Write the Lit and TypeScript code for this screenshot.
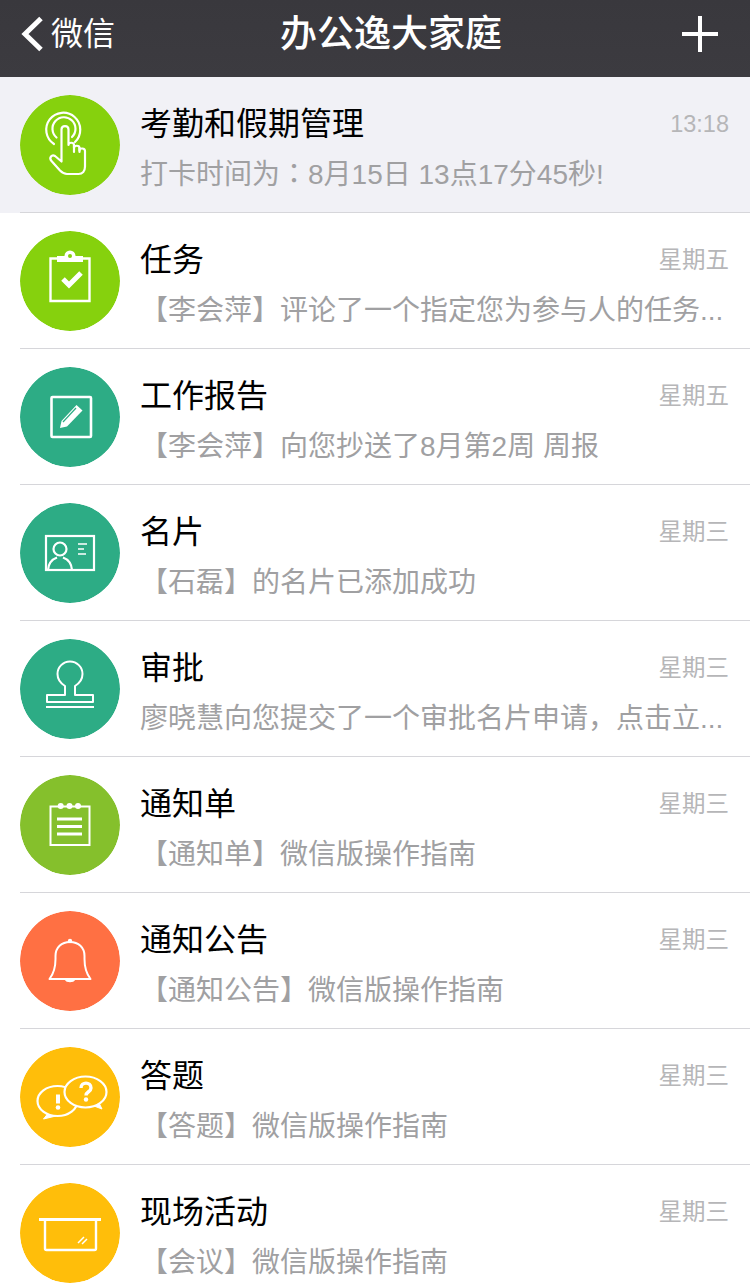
import { LitElement, html, css, svg } from "lit";
import { customElement } from "lit/decorators.js";

const icons: Record<string, unknown> = {
  hand: svg`<g fill="none" stroke="#fff" stroke-width="2.200" stroke-linejoin="round" stroke-linecap="round">
    <path d="M34 49A17 17 0 1 1 55 47"/><path d="M36.500 42.500A11.500 11.500 0 1 1 52 42"/>
    <path d="M31.500 66c-3-3.500 .5-7 3.500-5l6.500 5.500V34.500c0-4.600 7-4.600 7 0V50c0-3 5.500-3 5.500 0v3c0-3 5.500-3 5.500 0v2.500c0-3 5.500-2.500 5.500 .5v15.500c0 4.500-2.500 7.500-6.500 7.500H47c-3 0-5-1.500-7-3.500z"/>
    <path d="M54 50v7M59.500 53v4"/></g>`,
  task: svg`<g fill="none" stroke="#fff" stroke-width="2.400"><path d="M37 27.500h-6.500v42.500h39V27.500H63"/><path d="M37 25v6h26v-6h-7.500a5.500 5.500 0 0 0-11 0z" fill="#fff" stroke="none"/><circle cx="50" cy="25" r="2" fill="#86d10d" stroke="none"/><path d="M43 48l6 6 12-12" stroke-width="5"/></g>`,
  report: svg`<g fill="none" stroke="#fff"><rect x="31.500" y="30" width="39.500" height="40" stroke-width="2.600" rx="1"/><path d="M40 61l1.500-7 15-16 6 5.500-15.500 16z" fill="#fff" stroke="none"/><path d="M43 55l13-14" stroke="#2dac85" stroke-width="1.200"/></g>`,
  card: svg`<g fill="none" stroke="#fff" stroke-width="2.200"><rect x="26" y="33" width="48" height="34"/><circle cx="40" cy="46" r="6.500"/><path d="M28 67c.5-7 5-11 9-12.500M52 67c-.5-7-5-11-9-12.500"/><path d="M58 41h9M58 46h6M58 51h8" stroke-width="1.700"/></g>`,
  stamp: svg`<g fill="none" stroke="#fff" stroke-width="2" stroke-linejoin="round"><path d="M45 47v9H27v7h46v-7H55v-9c4-2.500 7.500-6.500 7.500-12a12.500 12.500 0 0 0-25 0c0 5.500 3.500 9.500 7.500 12z"/><path d="M26 68h48" stroke-width="2.200"/></g>`,
  note: svg`<g fill="none" stroke="#fff"><rect x="30.500" y="31.500" width="39" height="38.500" stroke-width="2"/><circle cx="40.700" cy="31" r="3" fill="#fff" stroke="none"/><circle cx="49.500" cy="31" r="3" fill="#fff" stroke="none"/><circle cx="58" cy="31" r="3" fill="#fff" stroke="none"/><path d="M37 44h25M37 51.500h25M37 59h25" stroke-width="3"/></g>`,
  bell: svg`<g fill="none" stroke="#fff" stroke-width="2" stroke-linejoin="round"><path d="M29.500 68c3.500-4.500 6-9.500 6-20v-3c0-8.500 6-14 14.500-14s14.500 5.500 14.500 14v3c0 10.500 2.500 15.500 6 20z"/><circle cx="50" cy="30" r="2.200" fill="#fff" stroke="none"/><path d="M45 69c1 3 9 3 10 0z" fill="#fff" stroke="none"/></g>`,
  quiz: svg`<g fill="none" stroke="#fff" stroke-width="2.200" stroke-linejoin="round"><ellipse cx="37.500" cy="54" rx="20" ry="15"/><path d="M27.500 67l-4 5 12.500-3" fill="#fff" stroke-width="1"/><ellipse cx="65.500" cy="45" rx="21" ry="15.500" fill="#ffbe0a"/><path d="M74 59l8 3-3-6" fill="#fff" stroke-width="1"/><path d="M61 41c0-6.500 10-6.500 10 0 0 4-5 3.500-5 7.500" stroke-width="3.400"/><circle cx="66" cy="52.500" r="2.200" fill="#fff" stroke="none"/><path d="M38 47.500v9" stroke-width="4"/><circle cx="38" cy="60.500" r="2.300" fill="#fff" stroke="none"/></g>`,
  meeting: svg`<g fill="none" stroke="#fff" stroke-width="2.400" stroke-linejoin="round"><path d="M19 36.500h62" stroke-width="2.800"/><path d="M25 36.500v29c0 1 .6 1.500 1.500 1.500h48c1 0 1.500-.5 1.500-1.500v-29"/><path d="M58 60l6-6M62 61l5-5" stroke-width="1.500"/></g>`,
};

const colon = html`<span class="tc">：</span>`;

const rows = [
  { icon: "hand", color: "#86d10d", title: "考勤和假期管理", time: "13:18", sub: html`打卡时间为${colon}8月15日 13点17分45秒!`, active: true },
  { icon: "task", color: "#86d10d", title: "任务", time: "星期五", sub: "【李会萍】评论了一个指定您为参与人的任务..." },
  { icon: "report", color: "#2dac85", title: "工作报告", time: "星期五", sub: "【李会萍】向您抄送了8月第2周 周报" },
  { icon: "card", color: "#2dac85", title: "名片", time: "星期三", sub: "【石磊】的名片已添加成功" },
  { icon: "stamp", color: "#2dac85", title: "审批", time: "星期三", sub: "廖晓慧向您提交了一个审批名片申请，点击立..." },
  { icon: "note", color: "#85c02c", title: "通知单", time: "星期三", sub: "【通知单】微信版操作指南" },
  { icon: "bell", color: "#ff7043", title: "通知公告", time: "星期三", sub: "【通知公告】微信版操作指南" },
  { icon: "quiz", color: "#ffbe0a", title: "答题", time: "星期三", sub: "【答题】微信版操作指南" },
  { icon: "meeting", color: "#ffbe0a", title: "现场活动", time: "星期三", sub: "【会议】微信版操作指南" },
];

@customElement("app-root")
export class AppRoot extends LitElement {
  static styles = css`
    :host {
      display: block;
      width: 750px;
      height: 1283px;
      overflow: hidden;
      background: #fff;
      font-family: "Liberation Sans", "Noto Sans CJK SC", sans-serif;
    }
    .nav {
      height: 77px;
      background: linear-gradient(#39383d, #3c3b40);
      color: #fff;
      display: grid;
      grid-template-columns: 259px auto 1fr;
      align-items: center;
      padding: 0 32px 9px 21px;
      box-sizing: border-box;
    }
    .back { display: flex; align-items: center; gap: 6px; font-size: 32px; line-height: 40px; }
    .back svg { display: block; }
    .title { font-size: 37px; font-weight: 500; line-height: 44px; margin-top: 1px; }
    .plus { justify-self: end; display: block; }
    .row {
      height: 136px;
      box-sizing: border-box;
      display: flex;
      align-items: flex-start;
      padding: 18px 0 0 20px;
      position: relative;
    }
    .row.active { background: #f1f1f6; }
    .row::after {
      content: "";
      position: absolute;
      left: 20px;
      right: 0;
      bottom: 0;
      height: 1px;
      background: #d6d6da;
    }
    .avatar { width: 100px; height: 100px; border-radius: 50%; flex: none; display: block; }
    .body { flex: 1; min-width: 0; margin-left: 20px; padding-right: 21px; }
    .top { display: flex; justify-content: space-between; align-items: center; height: 46px; margin-top: 6px; }
    .name { font-size: 32px; color: #000; line-height: 46px; }
    .time { font-size: 23.500px; color: #b6b6b8; line-height: 46px; }
    .sub { font-size: 28px; color: #a0a0a2; line-height: 40px; margin-top: 8px; white-space: nowrap; }
    .tc { font-family: "Noto Sans CJK TC", sans-serif; line-height: 0; }
  `;

  render() {
    return html`
      <div class="nav">
        <div class="back">
          <svg width="24" height="36" viewBox="0 0 24 36"><path d="M20 2.500L4 18l16 15.500" fill="none" stroke="#fff" stroke-width="5"/></svg>
          <span>微信</span>
        </div>
        <div class="title">办公逸大家庭</div>
        <svg class="plus" width="36" height="36" viewBox="0 0 36 36"><path d="M18 0v36M0 18h36" stroke="#fff" stroke-width="4"/></svg>
      </div>
      ${rows.map(
        (r) => html`
          <div class="row ${r.active ? "active" : ""}">
            <svg class="avatar" viewBox="0 0 100 100"><circle cx="50" cy="50" r="50" fill=${r.color}></circle>${icons[r.icon]}</svg>
            <div class="body">
              <div class="top"><span class="name">${r.title}</span><span class="time">${r.time}</span></div>
              <div class="sub">${r.sub}</div>
            </div>
          </div>
        `
      )}
    `;
  }
}
